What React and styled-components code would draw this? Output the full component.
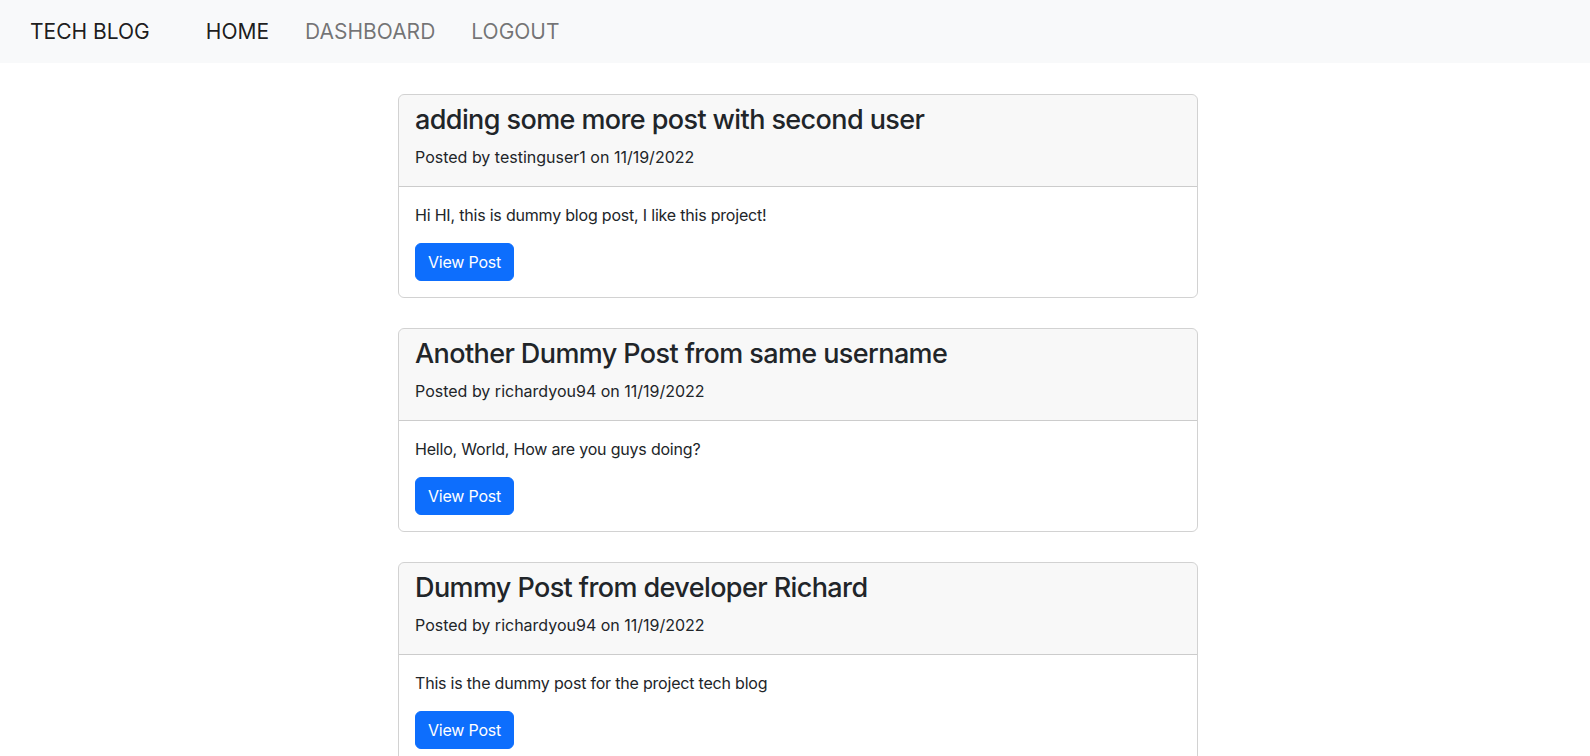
import styled, { createGlobalStyle } from "styled-components";

const posts = [
  {
    id: 1,
    title: "adding some more post with second user",
    author: "testinguser1",
    date: "11/19/2022",
    body: "Hi HI, this is dummy blog post, I like this project!",
  },
  {
    id: 2,
    title: "Another Dummy Post from same username",
    author: "richardyou94",
    date: "11/19/2022",
    body: "Hello, World, How are you guys doing?",
  },
  {
    id: 3,
    title: "Dummy Post from developer Richard",
    author: "richardyou94",
    date: "11/19/2022",
    body: "This is the dummy post for the project tech blog",
  },
];

export default function App() {
  return (
    <>
      <GlobalStyle />
      <Navbar>
        <Brand href="#">TECH BLOG</Brand>
        <NavList>
          <NavLink href="#" $active>
            HOME
          </NavLink>
          <NavLink href="#">DASHBOARD</NavLink>
          <NavLink href="#">LOGOUT</NavLink>
        </NavList>
      </Navbar>
      <Main>
        <Feed>
          {posts.map((post) => (
            <Card key={post.id}>
              <CardHeader>
                <Title>{post.title}</Title>
                <Meta>
                  Posted by {post.author} on {post.date}
                </Meta>
              </CardHeader>
              <CardBody>
                <Text>{post.body}</Text>
                <Button>View Post</Button>
              </CardBody>
            </Card>
          ))}
        </Feed>
      </Main>
    </>
  );
}

const GlobalStyle = createGlobalStyle`
  * {
    box-sizing: border-box;
  }

  body {
    margin: 0;
    background: #fff;
    color: #212529;
    font-family: Inter, "Noto Sans", "Liberation Sans", sans-serif;
    font-size: 16px;
    line-height: 1.5;
  }
`;

const Navbar = styled.nav`
  display: flex;
  align-items: center;
  height: 63px;
  padding: 0 30px;
  background: #f8f9fa;
`;

const Brand = styled.a`
  font-size: 21px;
  color: rgba(0, 0, 0, 0.9);
  text-decoration: none;
  margin-right: 56px;
`;

const NavList = styled.div`
  display: flex;
  gap: 36px;
`;

const NavLink = styled.a`
  font-size: 21px;
  text-decoration: none;
  color: ${(props) => (props.$active ? "rgba(0, 0, 0, 0.9)" : "rgba(0, 0, 0, 0.55)")};
`;

const Main = styled.main`
  display: flex;
  justify-content: center;
  padding: 31px 0 0 6px;
`;

const Feed = styled.div`
  width: 800px;
`;

const Card = styled.article`
  border: 1px solid rgba(0, 0, 0, 0.175);
  border-radius: 6px;
  margin-bottom: 30px;
  overflow: hidden;
`;

const CardHeader = styled.header`
  padding: 8px 16px;
  background: rgba(33, 37, 41, 0.03);
  border-bottom: 1px solid rgba(0, 0, 0, 0.175);
`;

const Title = styled.h3`
  margin: 0 0 8px;
  font-size: 27px;
  font-weight: 500;
  letter-spacing: -0.6px;
  line-height: 34px;
`;

const Meta = styled.p`
  margin: 0 0 9px;
`;

const CardBody = styled.div`
  padding: 16px;
`;

const Text = styled.p`
  margin: 0 0 16px;
  letter-spacing: -0.2px;
`;

const Button = styled.button`
  font: inherit;
  letter-spacing: -0.2px;
  color: #fff;
  background: #0d6efd;
  border: 1px solid #0d6efd;
  border-radius: 6px;
  padding: 6px 12px;
  line-height: 24px;
  cursor: pointer;
`;
